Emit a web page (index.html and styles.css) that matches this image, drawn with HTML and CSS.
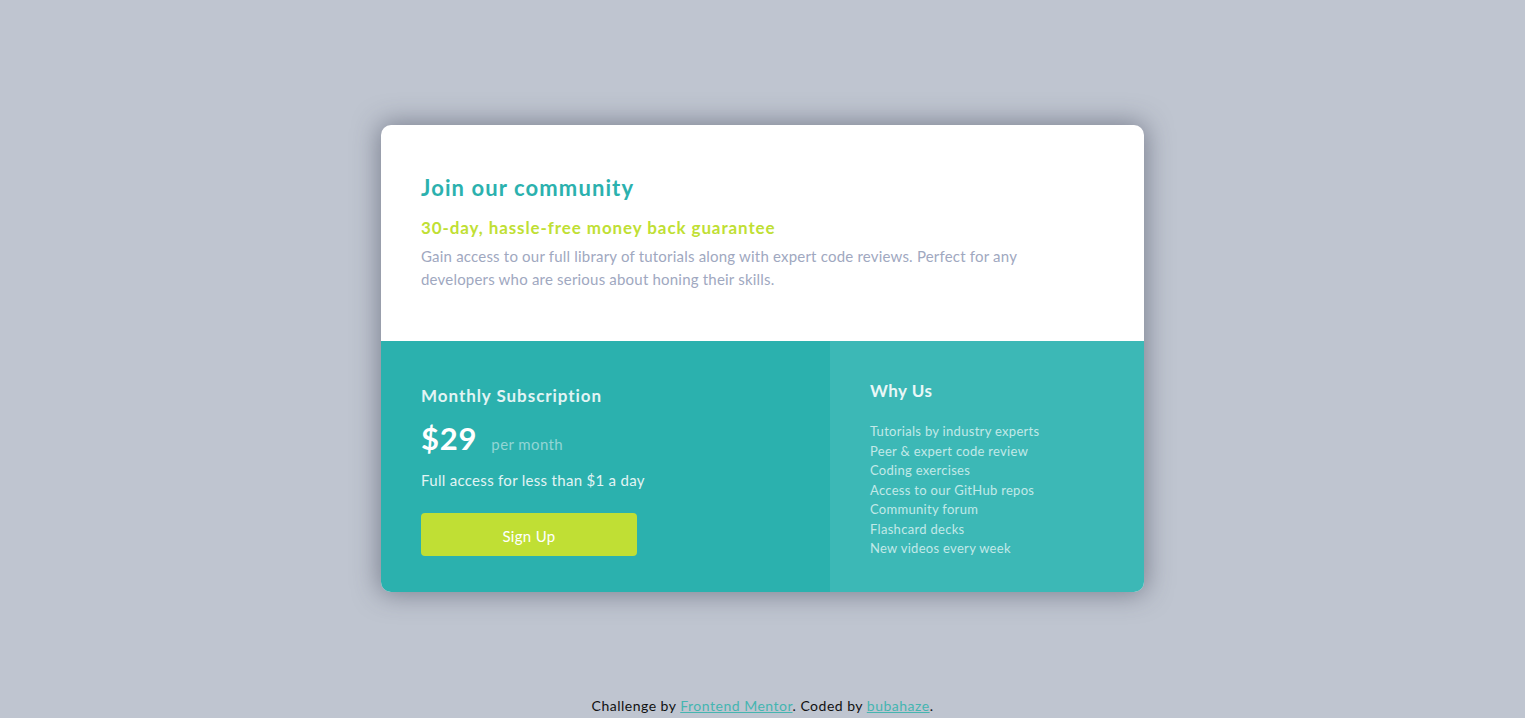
FILE: index.html
```html
<!DOCTYPE html>
<html lang="en">
<head>
<meta charset="utf-8">
<title>Single price grid component</title>
<link rel="stylesheet" href="styles.css">
</head>
<body>
<main class="page">
  <section class="card">
    <div class="intro">
      <h1 class="intro-title">Join our community</h1>
      <h2 class="intro-sub">30-day, hassle-free money back guarantee</h2>
      <p class="intro-text">Gain access to our full library of tutorials along with expert code reviews. Perfect for any developers who are serious about honing their skills.</p>
    </div>
    <div class="bottom">
      <div class="sub">
        <h3 class="sub-title">Monthly Subscription</h3>
        <div class="price"><span class="price-amount">$29</span><span class="price-per">per month</span></div>
        <p class="sub-text">Full access for less than $1 a day</p>
        <button class="btn">Sign Up</button>
      </div>
      <div class="why">
        <h3 class="why-title">Why Us</h3>
        <ul class="why-list">
          <li>Tutorials by industry experts</li>
          <li>Peer &amp; expert code review</li>
          <li>Coding exercises</li>
          <li>Access to our GitHub repos</li>
          <li>Community forum</li>
          <li>Flashcard decks</li>
          <li>New videos every week</li>
        </ul>
      </div>
    </div>
  </section>
</main>
<footer class="attribution">
  Challenge by <a href="#">Frontend Mentor</a>. Coded by <a href="#">bubahaze</a>.
</footer>
</body>
</html>
```
FILE: styles.css
```css
* { box-sizing: border-box; }
html, body { margin: 0; padding: 0; }
body {
  background: #bfc5d0;
  font-family: "Lato", "Liberation Sans", sans-serif;
  min-height: 718px;
  display: flex;
  flex-direction: column;
}
.page {
  display: flex;
  justify-content: center;
  padding-top: 125px;
}
.card {
  width: 763px;
  border-radius: 10px;
  overflow: hidden;
  background: #fff;
  box-shadow: 0 0 26px 2px rgba(55, 60, 80, 0.5);
}
.intro {
  height: 216px;
  padding: 50px 40px 0 40px;
}
.intro-title {
  margin: 0;
  color: #2bb1ae;
  font-size: 22px;
  font-weight: 700;
  letter-spacing: 1.1px;
  line-height: 26px;
}
.intro-sub {
  margin: 16px 0 0;
  color: #c0df34;
  font-size: 17px;
  font-weight: 700;
  letter-spacing: 0.9px;
  line-height: 22px;
}
.intro-text {
  margin: 6px 0 0;
  color: #a0a8bf;
  font-size: 15px;
  letter-spacing: 0.2px;
  line-height: 23px;
  max-width: 620px;
}
.bottom {
  display: flex;
  height: 251px;
}
.sub {
  width: 449px;
  background: #2bb1ae;
  padding: 43px 40px 0 40px;
}
.sub-title {
  margin: 0;
  color: #e2f4f4;
  font-size: 17px;
  font-weight: 700;
  letter-spacing: 0.95px;
  line-height: 24px;
}
.price {
  display: flex;
  align-items: baseline;
  margin-top: 12px;
}
.price-amount {
  color: #fff;
  font-size: 31px;
  font-weight: 700;
  letter-spacing: 0.8px;
  line-height: 36px;
}
.price-per {
  margin-left: 14px;
  color: #93d6d5;
  font-size: 15px;
  letter-spacing: 0.4px;
}
.sub-text {
  margin: 13px 0 0;
  color: #e2f4f4;
  font-size: 15px;
  letter-spacing: 0.3px;
  line-height: 22px;
}
.btn {
  margin-top: 22px;
  width: 216px;
  height: 43px;
  border: 0;
  border-radius: 4px;
  background: #c0df34;
  color: #fff;
  font-family: inherit;
  font-size: 15px;
  letter-spacing: 0.3px;
  padding: 2px 0 0;
}
.why {
  flex: 1;
  background: #3cb8b6;
  padding: 38px 40px 0 40px;
}
.why-title {
  margin: 0;
  color: #e9f7f7;
  font-size: 17px;
  font-weight: 700;
  letter-spacing: 0.5px;
  line-height: 24px;
}
.why-list {
  list-style: none;
  margin: 19px 0 0;
  padding: 0;
  color: #c2e9e8;
  font-size: 13px;
  letter-spacing: 0.3px;
  line-height: 19.5px;
}
.attribution {
  margin-top: auto;
  padding-bottom: 3px;
  text-align: center;
  font-size: 14px;
  letter-spacing: 0.5px;
  line-height: 18px;
  color: #111;
}
.attribution a {
  color: #45b5b0;
}
```
